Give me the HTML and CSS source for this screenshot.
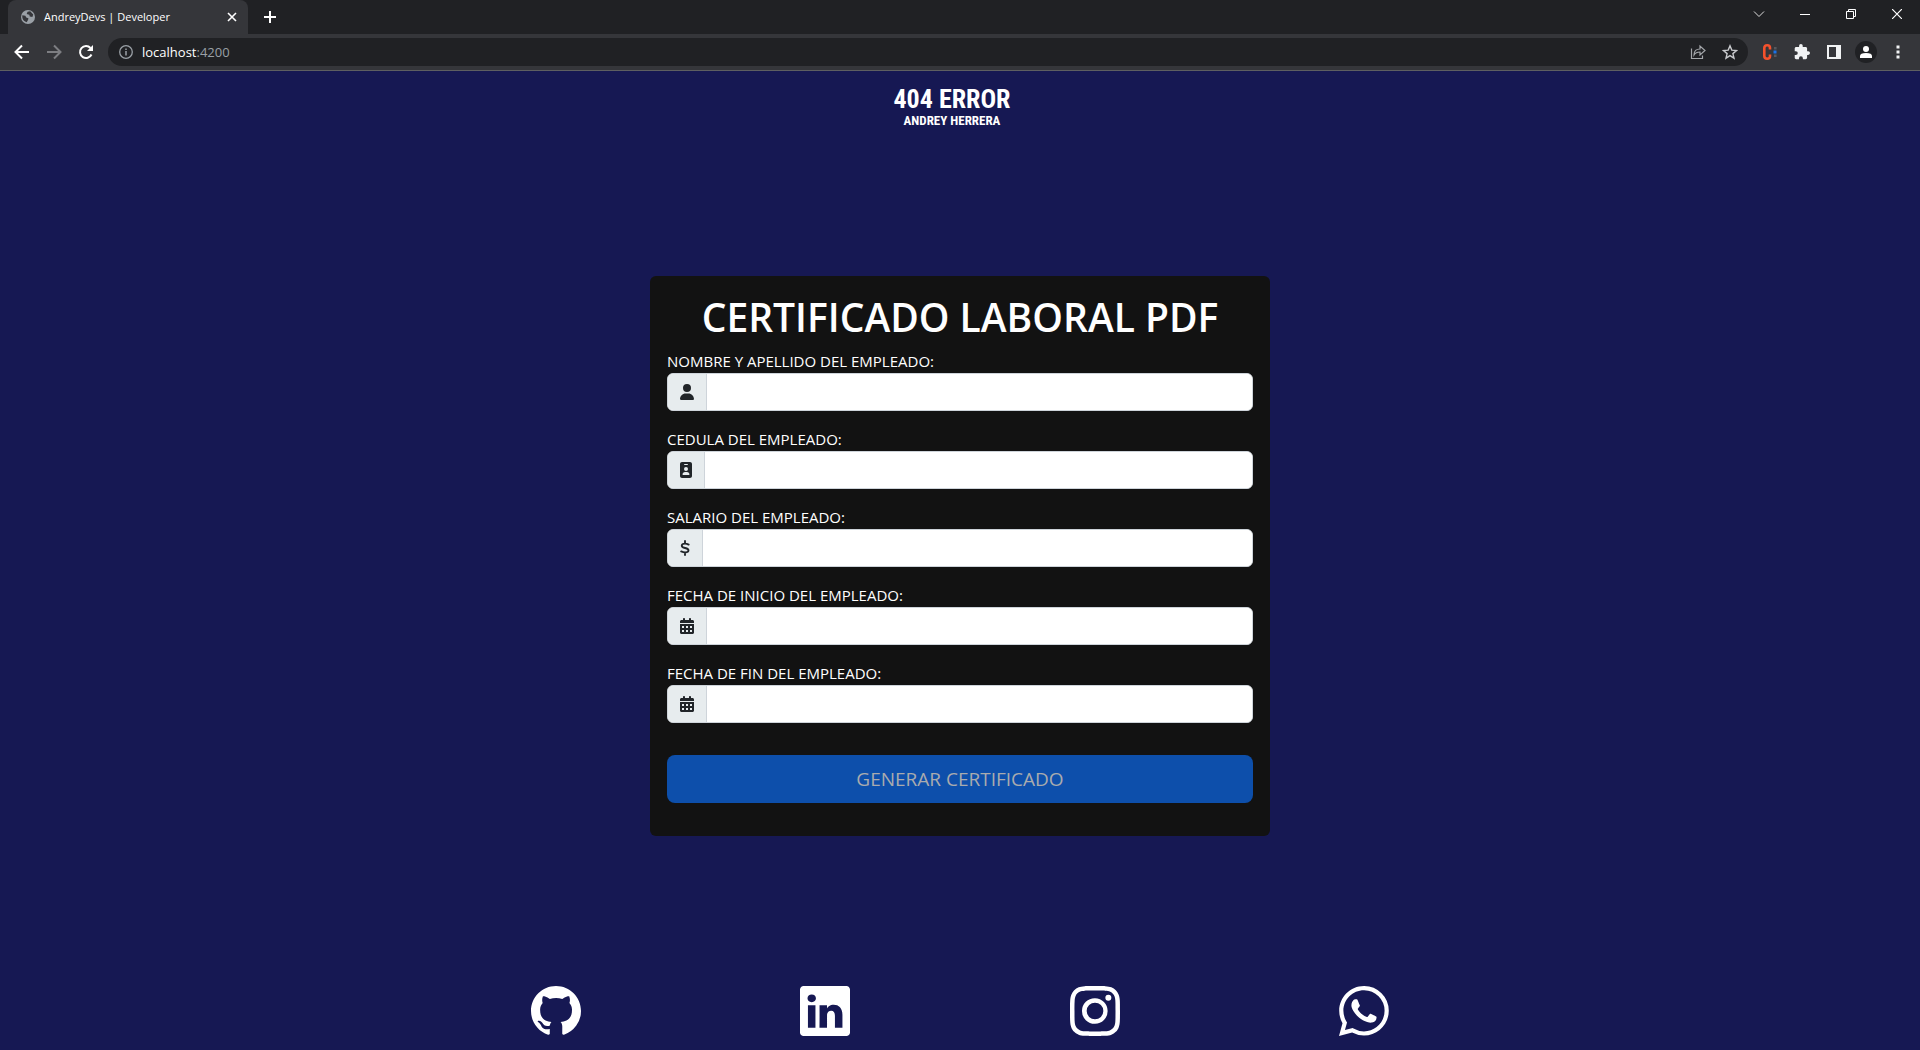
FILE: index.html
```html
<!DOCTYPE html>
<html lang="es">
<head>
<meta charset="utf-8">
<meta name="viewport" content="width=device-width, initial-scale=1">
<title>AndreyDevs | Developer</title>
<link rel="stylesheet" href="styles.css">
</head>
<body>
<div class="browser">
  <div class="tabstrip">
    <div class="tab">
      <svg class="tab-icon" viewBox="0 0 16 16" width="14" height="14" aria-hidden="true"><circle cx="8" cy="8" r="8" fill="#9aa0a6"/><path d="M1.500 6l3.500.5 1 2 2.500 1-.5 2-1.500 2.500C3.500 13 1 10.500 1.500 6zM7.500 2l3-.5 3.500 3.500-1 3-3-.5-.5-2-3-1z" fill="#35363a"/></svg>
      <span class="tab-title">AndreyDevs | Developer</span>
      <button class="icon-btn" aria-label="Cerrar pestaña"><svg viewBox="0 0 10 10" width="10" height="10"><path d="M1 1l8 8M9 1l-8 8" stroke="#fff" stroke-width="1.6"/></svg></button>
    </div>
    <button class="icon-btn new-tab" aria-label="Nueva pestaña"><svg viewBox="0 0 12 12" width="12" height="12"><path d="M6 0v12M0 6h12" stroke="#fff" stroke-width="2"/></svg></button>
    <div class="window-controls">
      <button class="icon-btn" aria-label="Buscar pestañas"><svg viewBox="0 0 12 12" width="12" height="12"><path d="M1 3.500l5 5 5-5" fill="none" stroke="#ddd"/></svg></button>
      <button class="icon-btn" aria-label="Minimizar"><svg viewBox="0 0 10 10" width="10" height="10"><path d="M0 5.500h10" stroke="#fff"/></svg></button>
      <button class="icon-btn" aria-label="Restaurar"><svg viewBox="0 0 10 10" width="10" height="10"><path d="M.5 2.500h7v7h-7zM2.500 2.500v-2h7v7h-2" fill="none" stroke="#fff"/></svg></button>
      <button class="icon-btn" aria-label="Cerrar"><svg viewBox="0 0 10 10" width="10" height="10"><path d="M0 0l10 10M10 0L0 10" stroke="#fff" stroke-width="1.200"/></svg></button>
    </div>
  </div>
  <div class="toolbar">
    <div class="nav">
      <button class="icon-btn" aria-label="Atrás"><svg viewBox="0 0 16 16" width="16" height="16"><path d="M15 8H2M8 1.500L1.500 8 8 14.500" fill="none" stroke="#fff" stroke-width="2"/></svg></button>
      <button class="icon-btn" aria-label="Adelante"><svg viewBox="0 0 16 16" width="16" height="16"><path d="M1 8h13M8 1.500L14.500 8 8 14.500" fill="none" stroke="#7d7e82" stroke-width="2"/></svg></button>
      <button class="icon-btn" aria-label="Recargar"><svg viewBox="0 0 16 16" width="16" height="16"><path d="M13.500 10.500A6 6 0 1 1 12.500 4" fill="none" stroke="#fff" stroke-width="2"/><path d="M15 1v6H9z" fill="#fff"/></svg></button>
    </div>
    <div class="omnibox">
      <svg viewBox="0 0 14 14" width="14" height="14" aria-hidden="true"><circle cx="7" cy="7" r="6.300" fill="none" stroke="#9aa0a6" stroke-width="1.300"/><path d="M7 6v4.500M7 3.500V5" stroke="#9aa0a6" stroke-width="1.500"/></svg>
      <span class="url">localhost<span class="port">:4200</span></span>
      <div class="omnibox-actions">
        <button class="icon-btn" aria-label="Compartir"><svg viewBox="0 0 16 16" width="16" height="16"><path d="M1.500 4.500v10h11v-3M4 11c0-4 2.500-6 6-6V2l5 4.500-5 4.500V8c-3 0-4.500.5-6 3z" fill="none" stroke="#a4a7ab" stroke-width="1.200"/></svg></button>
        <button class="icon-btn" aria-label="Favoritos"><svg viewBox="0 0 16 16" width="16" height="16"><path d="M8 1.800l1.800 4.300 4.700.4-3.600 3.100 1.100 4.600L8 11.700l-4 2.500 1.100-4.600L1.500 6.500l4.700-.4z" fill="none" stroke="#c8cacd" stroke-width="1.400"/></svg></button>
      </div>
    </div>
    <div class="extensions">
      <button class="icon-btn" aria-label="Extensión"><svg viewBox="0 0 16 16" width="16" height="16"><path d="M8 5.500V4Q8 1.300 5.200 1.300T2.300 4v8q0 2.700 2.900 2.700T8 12v-1.500" fill="none" stroke="#f4512c" stroke-width="2.600"/><path d="M12 3h2.600v2.600H12zM12 10.400h2.600V13H12z" fill="#55585d"/><path d="M11.500 6.500h3v3h-3z" fill="#1a73e8"/></svg></button>
      <button class="icon-btn" aria-label="Extensiones"><svg viewBox="1 1 22 22" width="16" height="16"><path fill="#f1f3f4" d="M20.500 11H19V7c0-1.100-.9-2-2-2h-4V3.500a2.500 2.500 0 0 0-5 0V5H4c-1.100 0-2 .9-2 2v3.800h1.500a2.700 2.700 0 0 1 0 5.400H2V20c0 1.100.9 2 2 2h3.800v-1.500a2.700 2.700 0 0 1 5.400 0V22H17c1.100 0 2-.9 2-2v-4h1.500a2.500 2.500 0 0 0 0-5z"/></svg></button>
      <button class="icon-btn" aria-label="Panel lateral"><svg viewBox="0 0 14 14" width="14" height="14"><path d="M0 0h14v14H0zM2 2v10h7V2z" fill="#f1f3f4" fill-rule="evenodd"/></svg></button>
      <button class="icon-btn avatar" aria-label="Perfil"><svg viewBox="0 0 12 12" width="12" height="12"><circle cx="6" cy="3" r="3" fill="#fff"/><path d="M0 12v-2q0-3 6-3t6 3v2z" fill="#fff"/></svg></button>
      <button class="icon-btn" aria-label="Menú"><svg viewBox="0 0 4 14" width="4" height="14"><path d="M.5.500h3v3h-3zM.5 5.500h3v3h-3zM.5 10.500h3v3h-3z" fill="#f1f3f4"/></svg></button>
    </div>
  </div>
</div>

<header class="brand">
  <span class="brand-title">404 ERROR</span>
  <span class="brand-name">ANDREY HERRERA</span>
</header>

<main class="content">
  <form class="card">
    <h1 class="card-title">CERTIFICADO LABORAL PDF</h1>
    <div class="field">
      <label for="nombre">NOMBRE Y APELLIDO DEL EMPLEADO:</label>
      <div class="input-group">
        <span class="addon"><svg viewBox="0 0 448 512" width="14" height="16"><path d="M224 256a128 128 0 1 0 0-256 128 128 0 1 0 0 256zm-45.700 48C79.800 304 0 383.800 0 482.300 0 498.700 13.300 512 29.700 512h388.600c16.400 0 29.700-13.300 29.700-29.700C448 383.800 368.200 304 269.700 304z"/></svg></span>
        <input id="nombre" type="text">
      </div>
    </div>
    <div class="field">
      <label for="cedula">CEDULA DEL EMPLEADO:</label>
      <div class="input-group">
        <span class="addon"><svg viewBox="0 0 384 512" width="12" height="16"><path fill-rule="evenodd" d="M64 0C28.700 0 0 28.700 0 64v384c0 35.300 28.700 64 64 64h256c35.300 0 64-28.700 64-64V64c0-35.300-28.700-64-64-64zm96 320h64c44.200 0 80 35.800 80 80 0 8.800-7.200 16-16 16H96c-8.800 0-16-7.200-16-16 0-44.200 35.800-80 80-80zm-32-96a64 64 0 1 1 128 0 64 64 0 1 1-128 0zm16-160h96c8.800 0 16 7.200 16 16s-7.200 16-16 16h-96c-8.800 0-16-7.200-16-16s7.200-16 16-16z"/></svg></span>
        <input id="cedula" type="text">
      </div>
    </div>
    <div class="field">
      <label for="salario">SALARIO DEL EMPLEADO:</label>
      <div class="input-group">
        <span class="addon"><svg viewBox="0 0 320 512" width="10" height="16"><path d="M160 32v70M160 410v70M276 148c-40-22-76-32-112-32-62 0-108 26-108 66 0 92 216 58 216 148 0 44-46 68-108 68-42 0-84-14-126-34" fill="none" stroke="currentColor" stroke-width="60" stroke-linecap="round"/></svg></span>
        <input id="salario" type="text">
      </div>
    </div>
    <div class="field">
      <label for="inicio">FECHA DE INICIO DEL EMPLEADO:</label>
      <div class="input-group">
        <span class="addon"><svg viewBox="0 0 448 512" width="14" height="16"><path fill-rule="evenodd" d="M128 0c17.700 0 32 14.300 32 32v32h128V32c0-17.700 14.300-32 32-32s32 14.300 32 32v32h48c26.500 0 48 21.500 48 48v48H0v-48c0-26.500 21.500-48 48-48h48V32c0-17.700 14.300-32 32-32zM0 192h448v272c0 26.500-21.500 48-48 48H48c-26.500 0-48-21.500-48-48zm64 64v64h64v-64zm128 0v64h64v-64zm128 0v64h64v-64zM64 384v64h64v-64zm128 0v64h64v-64zm128 0v64h64v-64z"/></svg></span>
        <input id="inicio" type="text">
      </div>
    </div>
    <div class="field">
      <label for="fin">FECHA DE FIN DEL EMPLEADO:</label>
      <div class="input-group">
        <span class="addon"><svg viewBox="0 0 448 512" width="14" height="16"><path fill-rule="evenodd" d="M128 0c17.700 0 32 14.300 32 32v32h128V32c0-17.700 14.300-32 32-32s32 14.300 32 32v32h48c26.500 0 48 21.500 48 48v48H0v-48c0-26.500 21.500-48 48-48h48V32c0-17.700 14.300-32 32-32zM0 192h448v272c0 26.500-21.500 48-48 48H48c-26.500 0-48-21.500-48-48zm64 64v64h64v-64zm128 0v64h64v-64zm128 0v64h64v-64zM64 384v64h64v-64zm128 0v64h64v-64zm128 0v64h64v-64z"/></svg></span>
        <input id="fin" type="text">
      </div>
    </div>
    <button class="submit" type="submit" disabled>GENERAR CERTIFICADO</button>
  </form>
</main>

<footer class="social">
  <a href="#" aria-label="GitHub"><svg viewBox="0 0 16 16" width="50" height="50"><path d="M8 0C3.580 0 0 3.580 0 8c0 3.540 2.290 6.530 5.470 7.590.4.070.55-.17.55-.38 0-.19-.01-.82-.01-1.490-2.010.37-2.530-.49-2.690-.94-.09-.23-.48-.94-.82-1.130-.28-.15-.68-.52-.01-.53.63-.01 1.080.58 1.230.82.72 1.210 1.870.87 2.330.66.070-.52.28-.87.51-1.070-1.780-.2-3.640-.89-3.640-3.950 0-.87.31-1.590.82-2.150-.08-.2-.36-1.020.08-2.120 0 0 .67-.21 2.200.82.64-.18 1.320-.27 2-.27s1.360.09 2 .27c1.530-1.040 2.200-.82 2.200-.82.44 1.100.16 1.920.08 2.120.51.56.82 1.270.82 2.150 0 3.070-1.870 3.750-3.650 3.950.29.25.54.73.54 1.480 0 1.070-.01 1.930-.01 2.200 0 .21.15.46.55.38A8.010 8.010 0 0 0 16 8c0-4.420-3.580-8-8-8"/></svg></a>
  <a href="#" aria-label="LinkedIn"><svg viewBox="0 0 16 16" width="50" height="50"><path d="M0 1.146C0 .513.526 0 1.175 0h13.650C15.474 0 16 .513 16 1.146v13.708c0 .633-.526 1.146-1.175 1.146H1.175C.526 16 0 15.487 0 14.854zm4.943 12.248V6.169H2.542v7.225zm-1.200-8.212c.837 0 1.358-.554 1.358-1.248-.015-.709-.52-1.248-1.342-1.248S2.400 3.226 2.400 3.934c0 .694.521 1.248 1.327 1.248zm4.908 8.212V9.359c0-.216.016-.432.08-.586.173-.431.568-.878 1.232-.878.869 0 1.216.662 1.216 1.634v3.865h2.401V9.250c0-2.220-1.184-3.252-2.764-3.252-1.274 0-1.845.7-2.165 1.193v.025h-.016l.016-.025V6.169h-2.400c.03.678 0 7.225 0 7.225z"/></svg></a>
  <a href="#" aria-label="Instagram"><svg viewBox="0 0 16 16" width="50" height="50"><path d="M8 0C5.829 0 5.556.01 4.703.048 3.850.088 3.269.222 2.760.42a3.900 3.900 0 0 0-1.417.923A3.900 3.900 0 0 0 .42 2.760C.222 3.268.087 3.850.048 4.700.01 5.555 0 5.827 0 8.001c0 2.172.01 2.444.048 3.297.04.852.174 1.433.372 1.942.205.526.478.972.923 1.417.444.445.89.719 1.416.923.510.198 1.090.333 1.942.372C5.555 15.990 5.827 16 8 16s2.444-.01 3.298-.048c.851-.04 1.434-.174 1.943-.372a3.900 3.900 0 0 0 1.416-.923c.445-.445.718-.891.923-1.417.197-.509.332-1.090.372-1.942C15.990 10.445 16 10.173 16 8s-.01-2.445-.048-3.299c-.04-.851-.175-1.433-.372-1.941a3.900 3.900 0 0 0-.923-1.417A3.900 3.900 0 0 0 13.240.42c-.510-.198-1.092-.333-1.943-.372C10.443.010 10.172 0 7.998 0zm-.717 1.442h.718c2.136 0 2.389.007 3.232.046.780.035 1.204.166 1.486.275.373.145.640.319.920.599s.453.546.598.920c.110.281.240.705.275 1.485.039.843.047 1.096.047 3.231s-.008 2.389-.047 3.232c-.035.780-.166 1.203-.275 1.485a2.500 2.500 0 0 1-.599.919c-.280.280-.546.453-.920.598-.280.110-.704.240-1.485.276-.843.038-1.096.047-3.232.047s-2.390-.009-3.233-.047c-.780-.036-1.203-.166-1.485-.276a2.500 2.500 0 0 1-.920-.598 2.500 2.500 0 0 1-.600-.920c-.109-.281-.240-.705-.275-1.485-.038-.843-.046-1.096-.046-3.233s.008-2.388.046-3.231c.036-.780.166-1.204.276-1.486.145-.373.319-.640.599-.920s.546-.453.920-.598c.282-.110.705-.240 1.485-.276.738-.034 1.024-.044 2.515-.045zm4.988 1.328a.960.960 0 1 0 0 1.920.960.960 0 0 0 0-1.920m-4.270 1.122a4.109 4.109 0 1 0 0 8.217 4.109 4.109 0 0 0 0-8.217m0 1.441a2.667 2.667 0 1 1 0 5.334 2.667 2.667 0 0 1 0-5.334"/></svg></a>
  <a href="#" aria-label="WhatsApp"><svg viewBox="0 0 16 16" width="50" height="50"><path d="M13.601 2.326A7.850 7.850 0 0 0 7.994 0C3.627 0 .068 3.558.064 7.926c0 1.399.366 2.760 1.057 3.965L0 16l4.204-1.102a7.900 7.900 0 0 0 3.790.965h.004c4.368 0 7.926-3.558 7.930-7.930A7.900 7.900 0 0 0 13.600 2.326zM7.994 14.521a6.600 6.600 0 0 1-3.356-.920l-.240-.144-2.494.654.666-2.433-.156-.251a6.560 6.560 0 0 1-1.007-3.505c0-3.626 2.957-6.584 6.591-6.584a6.560 6.560 0 0 1 4.660 1.931 6.560 6.560 0 0 1 1.928 4.660c-.004 3.639-2.961 6.592-6.592 6.592m3.615-4.934c-.197-.099-1.170-.578-1.353-.646-.182-.065-.315-.099-.445.099-.133.197-.513.646-.627.775-.114.133-.232.148-.430.050-.197-.100-.836-.308-1.592-.985-.590-.525-.985-1.175-1.103-1.372-.114-.198-.011-.304.088-.403.087-.088.197-.232.296-.346.100-.114.133-.198.198-.330.065-.134.034-.248-.015-.347-.050-.099-.445-1.076-.612-1.470-.160-.389-.323-.335-.445-.340-.114-.007-.247-.007-.380-.007a.730.730 0 0 0-.529.247c-.182.198-.691.677-.691 1.654s.710 1.916.810 2.049c.098.133 1.394 2.132 3.383 2.992.470.205.840.326 1.129.418.475.152.904.129 1.246.080.380-.058 1.171-.480 1.338-.943.164-.464.164-.860.114-.943-.049-.084-.182-.133-.380-.232"/></svg></a>
</footer>
</body>
</html>
```

FILE: styles.css
```css
* { box-sizing: border-box; }

body {
  margin: 0;
  min-height: 100vh;
  display: flex;
  flex-direction: column;
  background: #161853;
  color: #fff;
  font: 16px/24px "Open Sans", "Noto Sans", sans-serif;
}

button, input { font: inherit; }
svg { display: block; }

/* Browser chrome */
.browser {
  background: #35363a;
  border-bottom: 1px solid #5e5f61;
}

.icon-btn {
  display: flex;
  align-items: center;
  justify-content: center;
  padding: 0;
  border: 0;
  background: none;
}

.tabstrip {
  display: flex;
  align-items: center;
  height: 34px;
  padding-left: 8px;
  background: #202124;
}

.tab {
  display: flex;
  align-items: center;
  width: 240px;
  height: 34px;
  padding: 0 11px 0 13px;
  border-radius: 8px 8px 0 0;
  background: #35363a;
}

.tab-title {
  flex: 1;
  margin-left: 9px;
  font-size: 11px;
}

.new-tab { margin-left: 16px; }

.window-controls {
  display: flex;
  align-self: flex-start;
  margin-left: auto;
}

.window-controls .icon-btn {
  width: 46px;
  height: 28px;
}

.toolbar {
  display: flex;
  align-items: center;
  height: 36px;
  padding: 0 11px 0 14px;
}

.nav {
  display: flex;
  gap: 16px;
  margin-right: 14px;
}

.omnibox {
  flex: 1;
  display: flex;
  align-items: center;
  gap: 9px;
  height: 28px;
  padding: 0 10px 0 11px;
  border-radius: 14px;
  background: #202124;
}

.url {
  flex: 1;
  font-size: 13px;
}

.port { color: #9aa0a6; }

.omnibox-actions {
  display: flex;
  gap: 16px;
}

.extensions {
  display: flex;
  align-items: center;
  gap: 10px;
  margin-left: 11px;
}

.extensions .icon-btn {
  width: 22px;
  height: 22px;
}

.extensions .avatar {
  border-radius: 50%;
  background: #202124;
}

/* Page */
.brand {
  display: flex;
  flex-direction: column;
  align-items: center;
  height: 69px;
  padding: 12px 16px 0 0;
  font-family: "Roboto Condensed", "Liberation Sans Narrow", "Roboto", sans-serif;
  font-weight: 700;
}

.brand-title {
  font-size: 26px;
  line-height: 32px;
}

.brand-name {
  font-size: 13px;
  line-height: 12px;
}

.content {
  flex: 1;
  display: flex;
  align-items: center;
  justify-content: center;
}

.card {
  width: 100%;
  max-width: 620px;
  padding: 17px 17px 33px;
  border-radius: 6px;
  background: #121212;
}

.card-title {
  margin: 0 0 8px;
  font-size: 39px;
  font-weight: 600;
  line-height: 48px;
  text-align: center;
}

.field { margin-bottom: 16px; }

.field label {
  display: block;
  font-size: 15px;
}

.input-group {
  display: flex;
  height: 38px;
  border: 1px solid #ced4da;
  border-radius: 6px;
  background: #fff;
  overflow: hidden;
}

.addon {
  display: flex;
  align-items: center;
  padding: 0 12px;
  border-right: 1px solid #ced4da;
  background: #e7ecee;
  color: #212529;
  fill: currentColor;
}

.input-group input {
  flex: 1;
  min-width: 0;
  padding: 0 12px;
  border: 0;
  background: #fff;
}

.submit {
  width: 100%;
  height: 48px;
  margin-top: 16px;
  border: 0;
  border-radius: 8px;
  background: #0d4fab;
  color: #a9abae;
  font-size: 19px;
}

.social {
  display: grid;
  grid-template-columns: repeat(4, 1fr);
  justify-items: center;
  width: 100%;
  max-width: 1078px;
  margin: 0 auto;
  padding: 14px 0;
}

.social a {
  color: #fff;
  fill: currentColor;
}
```
